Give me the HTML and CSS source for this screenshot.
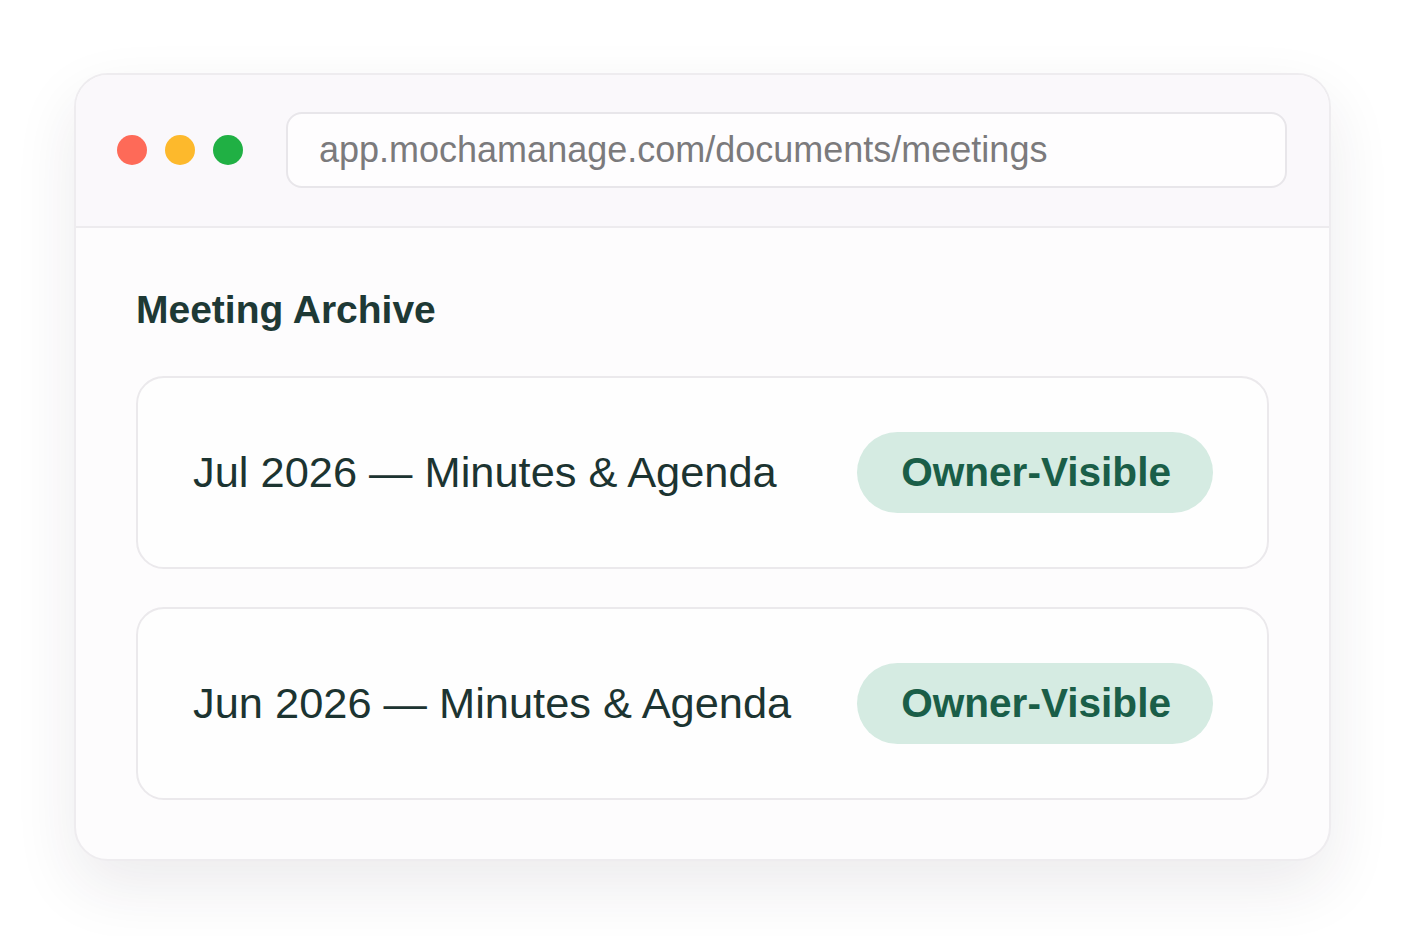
FILE: index.html
```html
<!DOCTYPE html>
<html lang="en">
<head>
<meta charset="UTF-8" />
<title>Meeting Archive</title>
<link rel="stylesheet" href="styles.css">
</head>
<body>

<div class="window">
  <div class="titlebar">
    <div class="dots">
      <span class="dot red"></span>
      <span class="dot yellow"></span>
      <span class="dot green"></span>
    </div>
    <div class="url">app.mochamanage.com/documents/meetings</div>
  </div>

  <div class="content">
    <h2 class="heading">Meeting Archive</h2>
    <ul class="meetings">
      <li class="meeting">
        <span class="meeting-name">Jul 2026 — Minutes &amp; Agenda</span>
        <span class="badge">Owner-Visible</span>
      </li>
      <li class="meeting">
        <span class="meeting-name">Jun 2026 — Minutes &amp; Agenda</span>
        <span class="badge">Owner-Visible</span>
      </li>
    </ul>
  </div>
</div>

</body>
</html>
```

FILE: styles.css
```css
html, body { height: 100%; }
body {
  margin: 0;
  box-sizing: border-box;
  background: #fff;
  font-family: "Liberation Sans", Arial, sans-serif;
  padding: 73px 0 0 74px;
}
.window {
  width: 1253px;
  border: 2px solid #eeecef;
  border-radius: 34px;
  background: #fdfcfd;
  overflow: hidden;
  box-shadow: 0 26px 64px rgba(40, 30, 50, 0.09);
}
.titlebar {
  display: flex;
  align-items: center;
  gap: 43px;
  padding: 37px 42px 38px 41px;
  background: #faf8fb;
  border-bottom: 2px solid #edebee;
}
.dots { display: flex; gap: 18px; }
.dot {
  width: 30px;
  height: 30px;
  border-radius: 50%;
}
.red { background: #fe6a58; }
.yellow { background: #fdb92c; }
.green { background: #20b044; }
.url {
  flex: 1;
  height: 72px;
  line-height: 72px;
  padding-left: 31px;
  background: #fefdfe;
  border: 2px solid #e8e6ea;
  border-radius: 16px;
  font-size: 36px;
  color: #7b7a7c;
}
.content {
  padding: 60px 60px 59px;
}
.heading {
  margin: 0 0 44px;
  font-size: 39px;
  line-height: 44px;
  color: #1e3935;
}
.meetings {
  list-style: none;
  margin: 0;
  padding: 0;
  display: flex;
  flex-direction: column;
  gap: 38px;
}
.meeting {
  display: flex;
  justify-content: space-between;
  align-items: center;
  padding: 54px 54px 54px 55px;
  border: 2px solid #ebe9ec;
  border-radius: 28px;
  background: #fefefe;
}
.meeting-name {
  font-size: 43.4px;
  color: #1c3431;
}
.badge {
  height: 81px;
  line-height: 81px;
  padding: 0 42px 0 44px;
  border-radius: 41px;
  background: #d5ebe2;
  color: #1a5e48;
  font-size: 40.6px;
  font-weight: bold;
}
```
